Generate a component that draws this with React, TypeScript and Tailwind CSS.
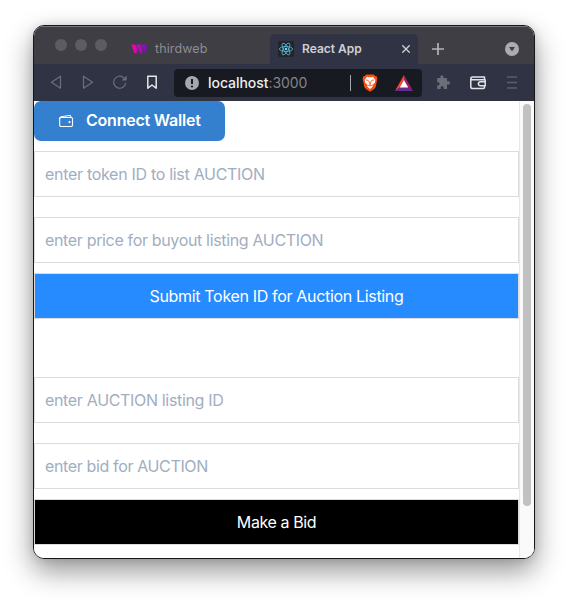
import React from "react";

function Field({ text, tracking, className = "" }: { text: string; tracking: string; className?: string }) {
  return (
    <div className={`flex h-[46px] shrink-0 items-center border border-[#dcdcdc] bg-white pl-[10px] text-base text-[#a0aec0] ${className}`}>
      <span className={`whitespace-nowrap ${tracking}`}>{text}</span>
    </div>
  );
}

function Action({ text, tone, tracking }: { text: string; tone: string; tracking: string }) {
  return (
    <button className={`mt-[10px] flex h-[46px] shrink-0 items-center justify-center border border-[#dcdcdc] text-base text-white ${tone}`}>
      <span className={`whitespace-nowrap ${tracking}`}>{text}</span>
    </button>
  );
}

function TabBar() {
  return (
    <div className="flex h-[38px] shrink-0 border-t border-[#77787a] bg-[#3e3e44]">
      <div className="flex w-[96px] gap-2 pt-[12px] pl-[21px]">
        <span className="size-3 rounded-full bg-[#5c5c61]" />
        <span className="size-3 rounded-full bg-[#5c5c61]" />
        <span className="size-3 rounded-full bg-[#5c5c61]" />
      </div>
      <div className="flex w-[140px] items-center pt-[7px]">
        <svg className="ml-px shrink-0" width="16" height="10" viewBox="0 0 16 10">
          <defs>
            <linearGradient id="tw" gradientUnits="userSpaceOnUse" x1="0" y1="0" x2="16" y2="0">
              <stop offset="0" stopColor="#f808a4" />
              <stop offset="1" stopColor="#7c0cc4" />
            </linearGradient>
          </defs>
          <path
            fill="url(#tw)"
            d="M.3.4h4.300l2 5.100L5.500 9.500 3.400 9ZM5.500.4h4.300l2 5.100L10.800 9.500 8.700 9ZM10.800.4h4.900L15.300 7l-1.200 2.500L12.900 6Z"
          />
        </svg>
        <span className="ml-[8px] text-[12.500px] tracking-[0.100px] text-[#8d8d92]">thirdweb</span>
      </div>
      <div className="mt-[7px] flex w-[148px] items-center rounded-t-[5px] bg-[#303343] pl-2">
        <svg width="16" height="16" viewBox="0 0 16 16" className="shrink-0">
          <rect width="16" height="16" rx="2" fill="#20242b" />
          <g fill="none" stroke="#5cb6d0" strokeWidth=".85">
            <ellipse cx="8" cy="8" rx="6.600" ry="2.500" />
            <ellipse cx="8" cy="8" rx="6.600" ry="2.500" transform="rotate(60 8 8)" />
            <ellipse cx="8" cy="8" rx="6.600" ry="2.500" transform="rotate(120 8 8)" />
          </g>
          <circle cx="8" cy="8" r="1.300" fill="#61dafb" />
        </svg>
        <span className="ml-2 text-[12px] font-semibold whitespace-nowrap text-[#cfd0d4]">React App</span>
        <svg className="mr-[8px] ml-auto" width="8" height="8" viewBox="0 0 8 8" stroke="#d0d1d4" strokeWidth="1.300">
          <path d="M.3.3l7.400 7.400M7.700.3.3 7.700" />
        </svg>
      </div>
      <div className="flex grow items-center pt-[7px] pr-[15px] pl-[14px]">
        <svg width="12" height="12" viewBox="0 0 12 12" stroke="#b4b4b7" strokeWidth="1.700">
          <path d="M6 0v12M0 6h12" />
        </svg>
        <svg className="ml-auto" width="14" height="14" viewBox="0 0 14 14">
          <circle cx="7" cy="7" r="7" fill="#acacaf" />
          <path d="M4 5h6L7 9.500Z" fill="#3e3e44" />
        </svg>
      </div>
    </div>
  );
}

function Toolbar() {
  return (
    <div className="flex h-[37px] shrink-0 items-center bg-[#303343]">
      <svg width="140" height="37" viewBox="34 64 140 37" fill="none" className="shrink-0">
        <g stroke="#6c6e79" strokeWidth="1.200" strokeLinejoin="round">
          <path d="M60.500 76.200v12L51.500 82.200Z" />
          <path d="M83.500 76.200v12L92.500 82.200Z" />
          <path d="M124 78A6 6 0 1 0 125.700 82.800" />
        </g>
        <path d="M126.600 75.500v5h-5Z" fill="#6c6e79" />
        <path d="M147.800 76.200h8.400v12l-4.200-3.200-4.200 3.200Z" stroke="#e6e6e9" strokeWidth="1.500" strokeLinejoin="round" />
      </svg>
      <div className="flex h-7 w-[248px] shrink-0 items-center rounded-[4px] bg-[#171a21]">
        <svg className="ml-[11px]" width="14" height="14" viewBox="0 0 14 14">
          <circle cx="7" cy="7" r="7" fill="#a5a7ad" />
          <path d="M7 3v5" stroke="#171a21" strokeWidth="2" />
          <circle cx="7" cy="10.500" r="1.100" fill="#171a21" />
        </svg>
        <span className="ml-[9px] text-[14px] tracking-[-0.050px] whitespace-nowrap text-[#828489]">
          <span className="font-medium text-[#eeeeef]">localhost</span>:3000
        </span>
        <span className="ml-auto h-4 w-px shrink-0 bg-[#a4a6ab]" />
        <svg className="ml-[11px] shrink-0" width="16" height="18" viewBox="0 0 16 19">
          <path d="M4 .5h8l1.500 1.700 1.600.2.700 3-.4 1.500-1.500 7.200L12 16.200 8 18.800 4 16.200 2.100 14.100.6 6.900.2 5.400l.7-3 1.600-.2Z" fill="#fb4c12" />
          <path d="m5 3 1.500.4h3L11 3l2.700 3-.6 3.200-2.500 2.300.3 1.700L8 15.800l-2.900-2.600.3-1.700-2.500-2.300L2.300 6Z" fill="#fff" />
          <path d="m3.500 6.200 3 .7M12.500 6.200l-3 .7M6.700 7.500 8 10.800l1.300-3.300M5.500 11.500 8 12.700l2.500-1.200M8 10.500v2" fill="none" stroke="#fb4c12" strokeWidth=".9" />
        </svg>
        <svg className="mr-[9px] ml-[17px] shrink-0" width="18" height="16" viewBox="0 0 18 16">
          <path d="M9 0 0 16l5.500-4L9 5.500Z" fill="#ff4724" />
          <path d="m9 0 9 16-5.500-4L9 5.500Z" fill="#9e1f63" />
          <path d="M0 16h18l-5.500-4h-7Z" fill="#662d91" />
          <path d="m9 5 4.200 7.500H4.800Z" fill="#fff" />
        </svg>
      </div>
      <svg width="112" height="37" viewBox="422 64 112 37" fill="none" className="shrink-0">
        <path fill="#6c6e79" d="M437.500 78h3v-.8c-1-2.700 3.800-2.700 2.900 0v.8h3.600v3.300h.8c2.900-.8 2.900 4 0 3.200h-.8V89h-3.300v-.7c.5-2.600-3.600-2.600-3.100 0v.7h-3.400v-3.500h.6c2.400.4 2.400-3.500 0-3.100h-.6V78Z" />
        <g stroke="#e3e3e7" strokeWidth="1.500" strokeLinejoin="round">
          <path d="M484.500 79.500V77h-12q-1.700 0-1.700 1.500v8.300q0 1.800 1.800 1.800h10.500q1.500 0 1.500-1.500v-1.500M471 78.500q0 1.200 1.700 1.200h12.500v6h-4.500q-2.300 0-2.300-2t2.300-2h4.500" />
        </g>
        <path d="M507 77h10M507 82.500h10M507 88h10" stroke="#5c5e6a" strokeWidth="1.300" />
      </svg>
    </div>
  );
}

function Page() {
  return (
    <div className="flex min-h-0 grow bg-white">
      <div className="flex w-[485px] shrink-0 flex-col overflow-hidden">
        <button className="flex h-10 w-[191px] shrink-0 items-center rounded-[7px] bg-[#3580ce] text-white">
          <svg className="ml-6 shrink-0" width="16" height="16" viewBox="0 0 16 16" fill="none" stroke="#fff" strokeWidth="1.100" strokeLinejoin="round">
            <rect x="1.700" y="4.500" width="12.800" height="9" rx="1.200" />
            <path d="M1.700 6V5q.1-1 1.500-1.300l8-1.200q1.400-.2 1.600 1v1" />
            <circle cx="11.500" cy="9" r=".5" fill="#fff" />
          </svg>
          <span className="ml-3 pb-0.5 text-base font-semibold tracking-[-0.220px] whitespace-nowrap">Connect Wallet</span>
        </button>
        <Field className="mt-[10px]" text="enter token ID to list AUCTION" tracking="tracking-[-0.300px]" />
        <Field className="mt-5" text="enter price for buyout listing AUCTION" tracking="tracking-[-0.340px]" />
        <Action text="Submit Token ID for Auction Listing" tone="bg-[#268bff]" tracking="tracking-[-0.330px]" />
        <Field className="mt-[58px]" text="enter AUCTION listing ID" tracking="tracking-[-0.330px]" />
        <Field className="mt-5" text="enter bid for AUCTION" tracking="tracking-[-0.360px]" />
        <Action text="Make a Bid" tone="bg-black" tracking="tracking-[-0.400px]" />
      </div>
      <div className="w-[15px] shrink-0 border-l border-[#e8e8e8] bg-[#fafafa] pt-[3px] pl-[3px]">
        <div className="h-[402px] w-2 rounded-full bg-[#c1c1c1]" />
      </div>
    </div>
  );
}

export default function App() {
  return (
    <div className="h-[600px] w-[568px] overflow-hidden bg-white pt-[25px] pl-[33px] font-['Inter','Liberation_Sans',sans-serif]">
      <div className="flex h-[534px] w-[502px] flex-col overflow-hidden rounded-[11px] border border-[#17171a] shadow-[0_12px_28px_rgba(0,0,0,0.42),0_0_10px_rgba(0,0,0,0.12)]">
        <TabBar />
        <Toolbar />
        <Page />
      </div>
    </div>
  );
}
